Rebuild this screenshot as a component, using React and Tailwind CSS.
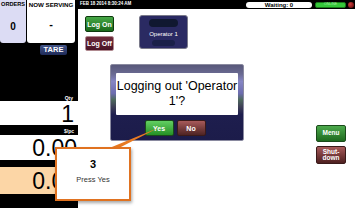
import React from 'react';

const font = { fontFamily: '"Liberation Sans", Arial, sans-serif' };

const LeftPanel = () => (
  <div className="w-[78px] h-full bg-black flex flex-col shrink-0">
    <div className="flex gap-[1px] h-[43px]">
      <div className="w-[26px] h-full bg-[#dcdcf4] rounded-b-[3px] flex flex-col items-center">
        <span className="text-[5.6px] font-bold leading-none mt-[2px] text-black whitespace-nowrap">ORDERS</span>
        <span className="text-[10px] font-bold leading-none mt-[14px] text-black">0</span>
      </div>
      <div className="w-[48px] h-full bg-white rounded-b-[3px] flex flex-col items-center">
        <span className="text-[6.2px] font-bold leading-none mt-[2px] text-black whitespace-nowrap">NOW SERVING</span>
        <span className="text-[11px] font-bold leading-none mt-[11px] text-black">-</span>
      </div>
    </div>
    <div className="ml-[40px] mt-[2px] w-[27px] h-[10px] rounded-[2px] bg-gradient-to-b from-[#44568a] to-[#1e2a58] flex items-center justify-center">
      <span className="text-[7.5px] font-bold text-white leading-none">TARE</span>
    </div>
    <div className="h-[40px]" />
    <div className="h-[6px] flex justify-end items-end pr-[5px]">
      <span className="text-[5px] text-white font-bold leading-none">Qty</span>
    </div>
    <div className="h-[24px] bg-white flex justify-end items-center pr-[4px]">
      <span className="text-[23px] leading-none text-black pt-[2px]">1</span>
    </div>
    <div className="h-[10px] flex justify-end items-end pr-[4px] pb-[1px]">
      <span className="text-[5px] text-white font-bold leading-none">$/pc</span>
    </div>
    <div className="h-[25px] bg-white flex justify-end items-center pr-[1px]">
      <span className="text-[23px] leading-none text-black pt-[2px]">0.00</span>
    </div>
    <div className="h-[7px]" />
    <div className="h-[27px] bg-[#fcd6a6] flex justify-end items-center pr-[1px]">
      <span className="text-[23px] leading-none text-black pt-[2px]">0.00</span>
    </div>
  </div>
);

const TopBar = () => (
  <div className="h-[9px] bg-black flex items-center pl-[2px] pr-[1px]">
    <span className="text-[4.5px] font-bold text-white leading-none">FEB 18 2014 8:30:24 AM</span>
    <div className="ml-auto w-[66px] h-[6px] rounded-full bg-white flex items-center justify-center">
      <span className="text-[6px] font-bold text-black leading-none">Waiting: 0</span>
    </div>
    <div className="ml-[3px] w-[31px] h-[6px] rounded-[2px] bg-[#35c83a] border border-[#1a7a1a] flex items-center justify-center">
      <span className="text-[3.5px] text-[#a8f0a8] leading-none">ONLINE</span>
    </div>
    <div className="ml-[2px] w-[6px] h-[6px] rounded-full bg-[radial-gradient(circle_at_35%_35%,#d04040,#500000)]" />
  </div>
);

const Btn = ({ children, className }) => (
  <div className={`flex items-center justify-center rounded-[2px] border text-white font-bold leading-none text-center whitespace-nowrap ${className}`}>
    {children}
  </div>
);

const Dialog = () => (
  <div className="absolute left-[32px] top-[55px] w-[134px] h-[77px] rounded-[2px] border border-[#8a8aa0] bg-[linear-gradient(to_bottom,#58587a_0%,#6a6a92_12%,#8686c4_22%,#6c6cae_38%,#4e6a5e_46%,#3e3e56_56%,#1e1e4e_66%,#1c1c4a_100%)] flex flex-col items-center pt-[8px]">
    <div className="w-[122px] h-[42px] bg-white rounded-[1px] flex items-center justify-center text-center">
      <span className="text-[12.5px] leading-[15px] text-black">Logging out 'Operator 1'?</span>
    </div>
    <div className="flex gap-[3px] mt-[5px] ml-[-4px]">
      <Btn className="w-[29px] h-[16px] border-[#1a4a1a] bg-gradient-to-b from-[#62d062] to-[#249024] text-[7px]">Yes</Btn>
      <Btn className="w-[29px] h-[16px] border-[#3a1a1a] bg-gradient-to-b from-[#a85a5a] to-[#4e2424] text-[7px]">No</Btn>
    </div>
  </div>
);

const Callout = () => (
  <>
    <svg className="absolute left-0 top-0 pointer-events-none" width="355" height="208">
      <polygon points="107,149 117,149 158,128" fill="#e87a22" />
    </svg>
    <div className="absolute left-[55px] top-[147px] w-[76px] h-[54px] bg-white border-2 border-[#e07220] shadow-[1px_2px_3px_rgba(0,0,0,0.35)] flex flex-col items-center">
      <span className="text-[11px] font-bold leading-none text-black mt-[10px]">3</span>
      <span className="text-[7.5px] leading-none text-[#333] mt-[6px]">Press Yes</span>
    </div>
  </>
);

export default function App() {
  return (
    <div className="relative w-[355px] h-[208px] overflow-hidden flex bg-white" style={font}>
      <LeftPanel />
      <div className="flex-1 flex flex-col">
        <TopBar />
        <div className="relative flex-1 flex pl-[7px] pt-[7px] pr-[9px]">
          <div className="flex flex-col gap-[4px]">
            <Btn className="w-[29px] h-[16px] border-[#0e3a0e] bg-gradient-to-b from-[#46a846] to-[#1a6a1a] text-[7px]">Log On</Btn>
            <Btn className="w-[29px] h-[15px] border-[#b08a90] bg-gradient-to-b from-[#6e2a3a] to-[#4a1426] text-[7px]">Log Off</Btn>
          </div>
          <div className="ml-[25px] mt-[-1px] w-[49px] h-[34px] rounded-[3px] border border-[#7a7a8a] bg-[#2a2a62] flex flex-col items-center relative overflow-hidden">
            <div className="absolute top-[3px] left-[9px] w-[29px] h-[8px] rounded-[4px] bg-[#101830]" />
            <div className="absolute top-[24px] left-[12px] w-[23px] h-[6px] rounded-[3px] bg-[#1a2048]" />
            <span className="relative text-[6px] text-white leading-none mt-[15px]">Operator 1</span>
          </div>
          <div className="ml-auto flex flex-col gap-[4px] pt-[109px]">
            <Btn className="w-[30px] h-[17px] border-[#1a4a1a] bg-gradient-to-b from-[#4caa4c] to-[#1e6a1e] text-[6.5px]">Menu</Btn>
            <Btn className="w-[30px] h-[18px] border-[#3a1a1a] bg-gradient-to-b from-[#a85a5a] to-[#4e2020] text-[6.5px] leading-[7px]">Shut-<br />down</Btn>
          </div>
          <Dialog />
        </div>
      </div>
      <Callout />
    </div>
  );
}
